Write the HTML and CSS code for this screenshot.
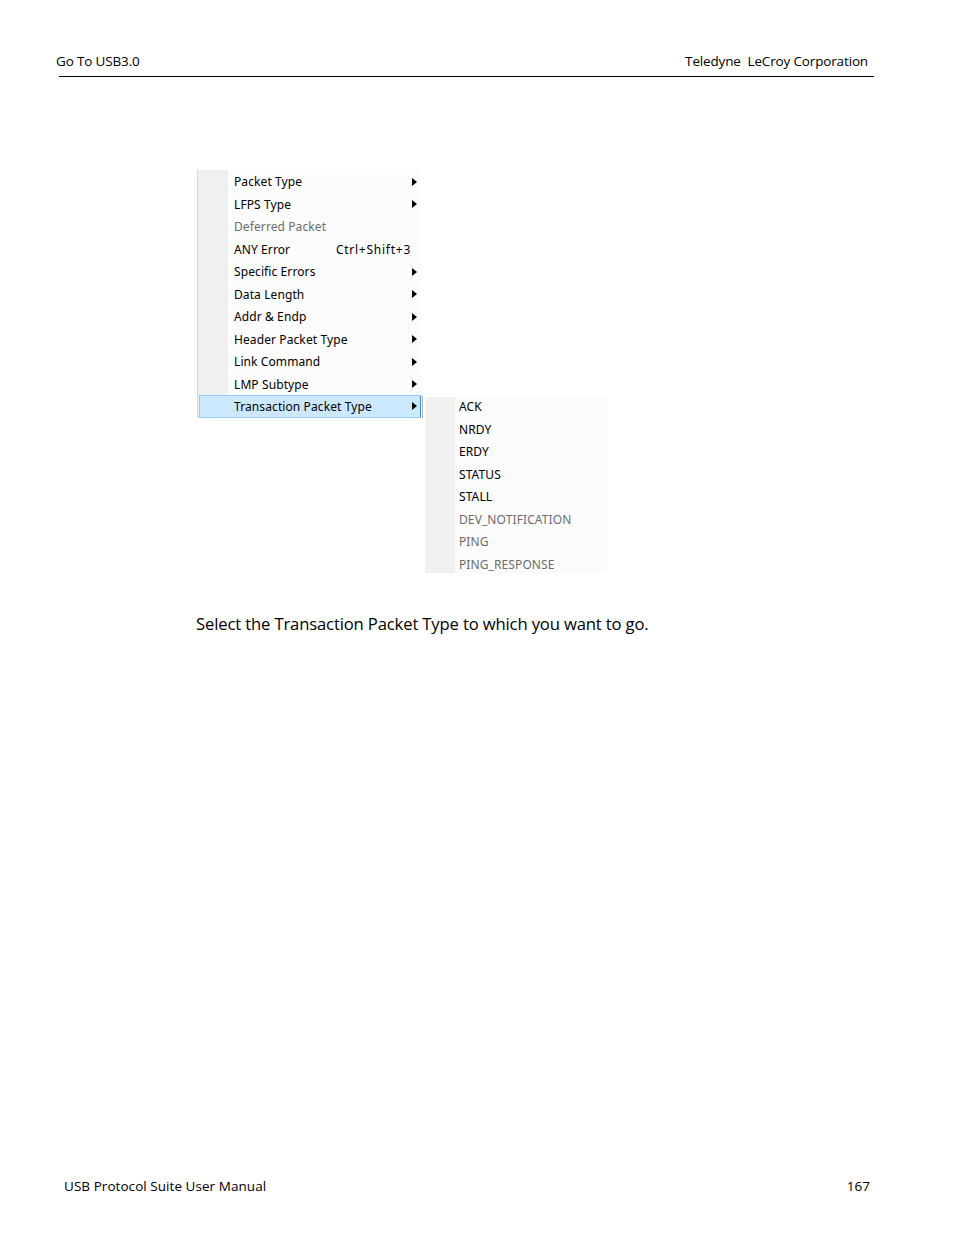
FILE: index.html
```html
<!DOCTYPE html>
<html>
<head>
<meta charset="utf-8">
<link rel="stylesheet" href="styles.css">
</head>
<body>
<div class="page">
  <div class="header">
    <span>Go To USB3.0</span>
    <span>Teledyne&nbsp; LeCroy Corporation</span>
  </div>
  <div class="rule"></div>

  <div class="figure">
    <div class="menu">
      <div class="item"><span class="label">Packet Type</span><span class="arrow"></span></div>
      <div class="item"><span class="label">LFPS Type</span><span class="arrow"></span></div>
      <div class="item disabled"><span class="label">Deferred Packet</span></div>
      <div class="item"><span class="label">ANY Error</span><span class="shortcut">Ctrl+Shift+3</span></div>
      <div class="item"><span class="label">Specific Errors</span><span class="arrow"></span></div>
      <div class="item"><span class="label">Data Length</span><span class="arrow"></span></div>
      <div class="item"><span class="label">Addr &amp; Endp</span><span class="arrow"></span></div>
      <div class="item"><span class="label">Header Packet Type</span><span class="arrow"></span></div>
      <div class="item"><span class="label">Link Command</span><span class="arrow"></span></div>
      <div class="item"><span class="label">LMP Subtype</span><span class="arrow"></span></div>
      <div class="item active"><span class="label">Transaction Packet Type</span><span class="arrow"></span></div>
    </div>
    <div class="sep"></div>
    <div class="submenu">
      <div class="sitem">ACK</div>
      <div class="sitem">NRDY</div>
      <div class="sitem">ERDY</div>
      <div class="sitem">STATUS</div>
      <div class="sitem">STALL</div>
      <div class="sitem disabled">DEV_NOTIFICATION</div>
      <div class="sitem disabled">PING</div>
      <div class="sitem disabled">PING_RESPONSE</div>
    </div>
  </div>

  <p class="caption">Select the Transaction Packet Type to which you want to go.</p>

  <div class="spacer"></div>

  <div class="footer">
    <span>USB Protocol Suite User Manual</span>
    <span>167</span>
  </div>
</div>
</body>
</html>
```

FILE: styles.css
```css
html, body {
  margin: 0;
  padding: 0;
  background: #ffffff;
}
.page {
  width: 954px;
  height: 1235px;
  display: flex;
  flex-direction: column;
  font-family: "Open Sans", "Noto Sans", sans-serif;
  color: #000;
}
.header {
  display: flex;
  justify-content: space-between;
  padding: 51px 86px 0 56px;
  font-size: 13.5px;
  line-height: 20px;
  letter-spacing: -0.15px;
}
.rule {
  margin: 5px 0 0 59px;
  width: 815px;
  height: 1px;
  background: #000;
}
.figure {
  display: flex;
  align-items: flex-start;
  margin: 93px 0 0 197px;
  font-family: "Noto Sans", "Open Sans", sans-serif;
  font-size: 12px;
  letter-spacing: 0.1px;
}
.menu {
  width: 224px;
  border-left: 1px solid #d8d8d8;
  background: linear-gradient(to right, #f0f0f0 0, #f0f0f0 30px, #fcfcfc 30px);
  box-sizing: border-box;
}
.item {
  height: 22.5px;
  display: flex;
  align-items: center;
  padding-left: 36px;
  padding-right: 4px;
  padding-top: 0.5px;
  box-sizing: border-box;
  position: relative;
}
.label {
  flex: 1;
}
.shortcut {
  margin-right: 6px;
  letter-spacing: 0.75px;
}
.arrow {
  width: 0;
  height: 0;
  border-left: 5px solid #000;
  border-top: 4.5px solid transparent;
  border-bottom: 4.5px solid transparent;
}
.disabled {
  color: #6d6d6d;
}
.item.active {
  background: #cce8ff;
  border: 1px solid #99ccf6;
  border-right-color: #3a8fe0;
  margin-left: 1px;
  padding-left: 34px;
  padding-right: 3px;
  padding-top: 0;
}
.sep {
  width: 1px;
  height: 22px;
  margin-top: 226px;
  margin-left: 1px;
  background: #b8b8b8;
}
.submenu {
  width: 182px;
  height: 176px;
  margin-top: 227px;
  margin-left: 2px;
  background: linear-gradient(to right, #f0f0f0 0, #f0f0f0 30px, #fbfbfb 30px);
}
.sitem {
  height: 22.5px;
  display: flex;
  align-items: center;
  padding-left: 34px;
  padding-bottom: 3px;
  box-sizing: border-box;
}
.caption {
  margin: 39px 0 0 196px;
  font-size: 16.65px;
  line-height: 24px;
  letter-spacing: -0.15px;
}
.spacer {
  flex: 1;
}
.footer {
  display: flex;
  justify-content: space-between;
  padding: 0 84px 39px 64px;
  font-size: 13.5px;
  line-height: 20px;
  letter-spacing: 0.05px;
}
```
